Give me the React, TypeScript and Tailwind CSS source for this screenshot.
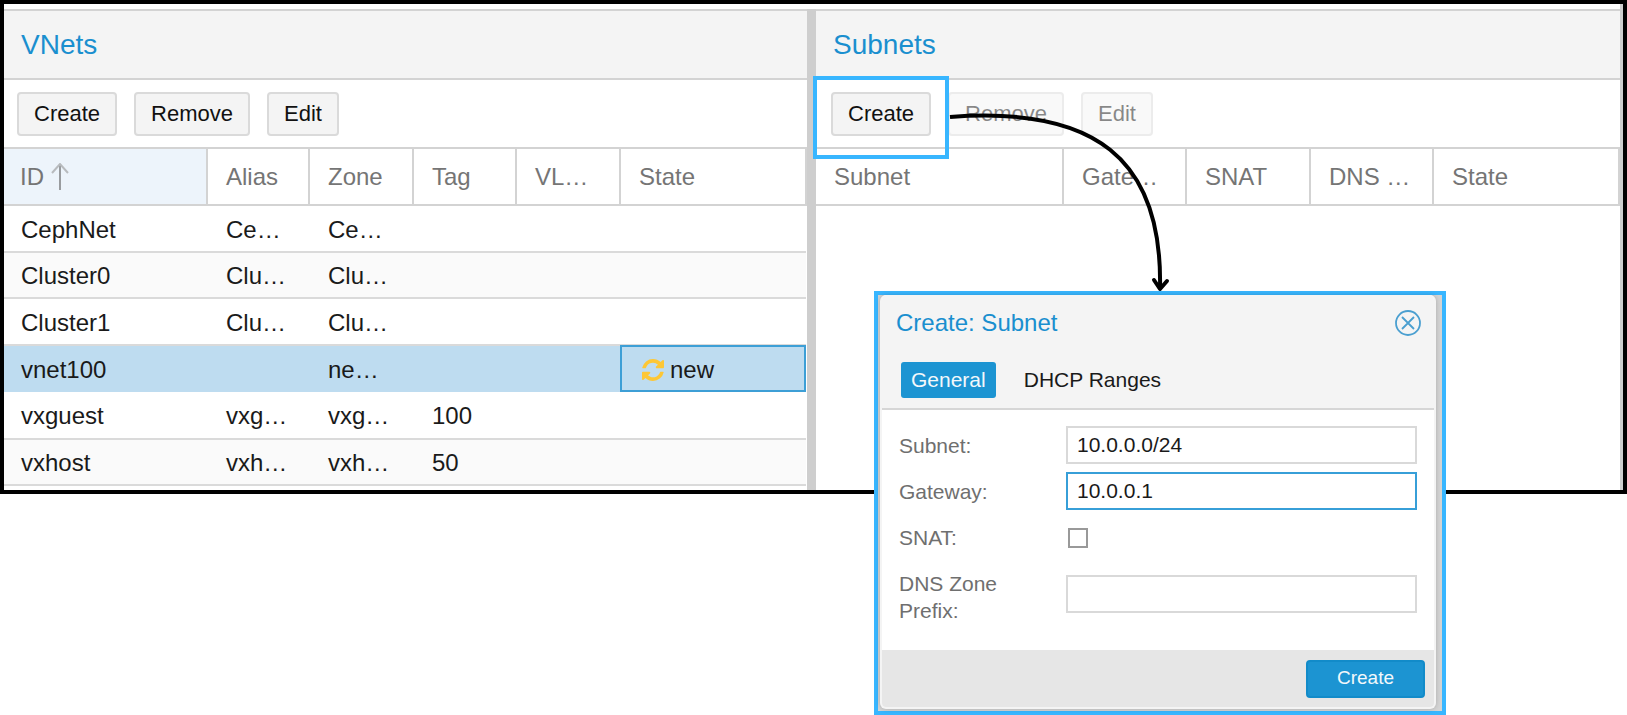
import React from "react";

type Column = { label: string; width?: string; sorted?: boolean };

const vnetColumns: Column[] = [
  { label: "ID", width: "w-[203px]", sorted: true },
  { label: "Alias", width: "w-[102px]" },
  { label: "Zone", width: "w-[104px]" },
  { label: "Tag", width: "w-[103px]" },
  { label: "VL…", width: "w-[104px]" },
  { label: "State" },
];

const subnetColumns: Column[] = [
  { label: "Subnet", width: "w-[247px]" },
  { label: "Gate…", width: "w-[123px]" },
  { label: "SNAT", width: "w-[124px]" },
  { label: "DNS …", width: "w-[123px]" },
  { label: "State" },
];

const vnets = [
  { id: "CephNet", alias: "Ce…", zone: "Ce…", tag: "" },
  { id: "Cluster0", alias: "Clu…", zone: "Clu…", tag: "" },
  { id: "Cluster1", alias: "Clu…", zone: "Clu…", tag: "" },
  { id: "vnet100", alias: "", zone: "ne…", tag: "", state: "new" },
  { id: "vxguest", alias: "vxg…", zone: "vxg…", tag: "100" },
  { id: "vxhost", alias: "vxh…", zone: "vxh…", tag: "50" },
];

function RefreshIcon() {
  return (
    <svg viewBox="0 0 1536 1536" className="size-[22px] fill-[#fdc735]" aria-hidden="true">
      <path d="M1511 928q0 5-1 7-64 268-268 434.5t-478 166.5q-146 0-282.5-55t-243.5-157l-129 129q-19 19-45 19t-45-19-19-45v-448q0-26 19-45t45-19h448q26 0 45 19t19 45-19 45l-137 137q71 66 161 102t187 36q134 0 250-65t186-179q11-17 53-117 8-23 30-23h192q13 0 22.5 9.5t9.5 22.5zm25-800v448q0 26-19 45t-45 19h-448q-26 0-45-19t-19-45 19-45l138-138q-148-137-349-137-134 0-250 65t-186 179q-11 17-53 117-8 23-30 23h-199q-13 0-22.5-9.5t-9.5-22.5v-7q65-268 270-434.5t480-166.5q146 0 284 55.5t245 156.5l130-129q19-19 45-19t45 19 19 45z" />
    </svg>
  );
}

function ToolButton({ children, disabled }: { children: React.ReactNode; disabled?: boolean }) {
  return (
    <button
      type="button"
      disabled={disabled}
      className="h-11 rounded-[4px] border-2 border-[#dadada] bg-[#f4f4f4] px-[15px] text-[22px] leading-10 text-[#111] disabled:opacity-50"
    >
      {children}
    </button>
  );
}

function PanelTitle({ children }: { children: React.ReactNode }) {
  return (
    <h2 className="h-[71px] border-y-2 border-[#d3d3d3] bg-[#f4f4f4] px-[17px] text-[28px] leading-[67px] text-[#1a8fcf]">
      {children}
    </h2>
  );
}

function HeadRow({ columns }: { columns: Column[] }) {
  return (
    <thead>
      <tr className="h-[57px]">
        {columns.map((c) => (
          <th
            key={c.label}
            className={`${c.width ?? ""} ${
              c.sorted ? "bg-[#edf4fb] pl-4" : "bg-white pl-[18px]"
            } border-y-2 border-r-2 border-[#d3d3d3] text-left font-normal whitespace-nowrap text-[#757575]`}
          >
            {c.label}
            {c.sorted && (
              <svg viewBox="0 0 18 28" className="ml-[7px] inline h-7 w-[18px] align-[-6px]" fill="none" strokeWidth="2">
                <path d="M9 27V1" stroke="#999c9f" />
                <path d="M1 10l8-9 8 9" stroke="#b8bbbe" />
              </svg>
            )}
          </th>
        ))}
      </tr>
    </thead>
  );
}

function VNetsPanel() {
  const cell = "pt-[2px] pl-[19px] whitespace-nowrap";
  return (
    <section className="min-w-0 flex-[803]">
      <PanelTitle>VNets</PanelTitle>
      <div className="flex h-[67px] items-center gap-[17px] px-[13px]">
        <ToolButton>Create</ToolButton>
        <ToolButton>Remove</ToolButton>
        <ToolButton>Edit</ToolButton>
      </div>
      <table className="w-full table-fixed border-collapse text-[24px] leading-8">
        <HeadRow columns={vnetColumns} />
        <tbody className="text-[#1a1a1a]">
          {vnets.map((v) => (
            <tr
              key={v.id}
              className={
                v.state
                  ? "h-[47px] bg-[#bedcf0]"
                  : "h-[46px] border-b-2 border-[#dadada] odd:h-[47px] even:bg-[#fafafa]"
              }
            >
              <td className="pt-[2px] pl-[17px] whitespace-nowrap">{v.id}</td>
              <td className={cell}>{v.alias}</td>
              <td className={cell}>{v.zone}</td>
              <td className={cell}>{v.tag}</td>
              <td className={cell} />
              <td className={v.state ? "pt-[2px] pl-[22px] outline-2 -outline-offset-2 outline-[#3d9fd6]" : cell}>
                {v.state && (
                  <span className="flex items-center gap-[6px]">
                    <RefreshIcon />
                    {v.state}
                  </span>
                )}
              </td>
            </tr>
          ))}
        </tbody>
      </table>
    </section>
  );
}

function SubnetsPanel() {
  return (
    <section className="min-w-0 flex-[804]">
      <PanelTitle>Subnets</PanelTitle>
      <div className="flex h-[67px] items-center gap-[17px] px-[15px]">
        <div className="relative">
          <ToolButton>Create</ToolButton>
          <div className="pointer-events-none absolute -top-4 -right-[18px] -bottom-[23px] -left-[18px] z-10 border-4 border-[#38b6ff]" />
        </div>
        <ToolButton disabled>Remove</ToolButton>
        <ToolButton disabled>Edit</ToolButton>
      </div>
      <table className="w-full table-fixed border-collapse text-[24px] leading-8">
        <HeadRow columns={subnetColumns} />
      </table>
    </section>
  );
}

function Field({ id, label, children }: { id: string; label: string; children: React.ReactNode }) {
  return (
    <div className="flex items-center">
      <label htmlFor={id} className="w-[167px] shrink-0 pr-10 leading-[27px]">
        {label}
      </label>
      {children}
    </div>
  );
}

const inputClass =
  "h-[38px] w-full min-w-0 border-2 border-[#d9d9d9] bg-white px-[9px] text-[21px] text-[#1a1a1a] outline-none";

function CreateSubnetDialog() {
  return (
    <div
      role="dialog"
      aria-labelledby="dialog-title"
      className="absolute top-[291px] left-[874px] w-[572px] border-4 border-[#38b6ff] bg-[#d4d4d4] pr-[6px] pb-[2px] pl-[2px] text-[21px]"
    >
      <div className="overflow-hidden rounded-[6px] border-x-2 border-b-2 border-[#f4f4f4] bg-white shadow-[0_0_5px_rgba(0,0,0,0.2)]">
        <header className="border-b-2 border-[#d6d6d6] bg-[#f4f4f4]">
          <div className="flex h-14 items-center justify-between pr-[13px] pl-[14px]">
            <h2 id="dialog-title" className="text-[24px] text-[#1a8fcf]">
              Create: Subnet
            </h2>
            <button type="button" aria-label="Close">
              <svg viewBox="0 0 26 26" className="size-[26px]" fill="none" stroke="#4a9fd0" strokeWidth="1.8">
                <circle cx="13" cy="13" r="12" />
                <path d="M7 7l12 12M19 7L7 19" />
              </svg>
            </button>
          </div>
          <div role="tablist" className="flex gap-[18px] px-[19px] pt-[11px] pb-[10px]">
            <button type="button" role="tab" aria-selected="true" className="h-9 rounded-[3px] bg-[#1c94d2] px-[10px] text-[#f3f8fb]">
              General
            </button>
            <button type="button" role="tab" aria-selected="false" className="h-9 px-[10px] text-[#1a1a1a]">
              DHCP Ranges
            </button>
          </div>
        </header>
        <div className="flex flex-col gap-2 pt-4 pr-[17px] pb-[26px] pl-[17px] text-[#6f6f6f]">
          <Field id="subnet" label="Subnet:">
            <input id="subnet" type="text" defaultValue="10.0.0.0/24" className={inputClass} />
          </Field>
          <Field id="gateway" label="Gateway:">
            <input id="gateway" type="text" defaultValue="10.0.0.1" className={`${inputClass} border-[#379fd8]!`} />
          </Field>
          <div className="flex h-[38px] items-center pt-[2px]">
            <label htmlFor="snat" className="w-[167px] shrink-0">
              SNAT:
            </label>
            <input id="snat" type="checkbox" className="ml-[2px] size-5 appearance-none border-2 border-[#999] bg-white" />
          </div>
          <div className="flex items-center">
            <label htmlFor="prefix" className="w-[167px] shrink-0 pt-[6px] pr-10 leading-[27px]">
              DNS Zone Prefix:
            </label>
            <input id="prefix" type="text" className={inputClass} />
          </div>
        </div>
        <footer className="flex h-[57px] items-center justify-end bg-[#e6e6e6] px-[9px]">
          <button type="button" className="h-[38px] rounded-[4px] border-2 border-[#128bc9] bg-[#1c94d2] px-[29px] text-[19px] text-[#f3f8fb]">
            Create
          </button>
        </footer>
      </div>
    </div>
  );
}

export default function App() {
  return (
    <div className="relative min-h-screen bg-white font-['Liberation_Sans',Arial,sans-serif]">
      <main className="flex h-[494px] overflow-hidden border-4 border-black pt-[5px]">
        <VNetsPanel />
        <div className="w-[9px] shrink-0 bg-[#cecece]" />
        <SubnetsPanel />
        <div className="-mt-[5px] w-[3px] shrink-0 bg-[#cecece]" />
      </main>
      <svg
        viewBox="0 0 230 190"
        className="pointer-events-none absolute top-[108px] left-[949px] z-20 h-[190px] w-[230px]"
        fill="none"
        stroke="#000"
        strokeWidth="4"
      >
        <path d="M1 9C145 -2 214 50 211 181" />
        <path d="M205 172l6 9 7-8" strokeLinecap="round" strokeLinejoin="round" />
      </svg>
      <CreateSubnetDialog />
    </div>
  );
}
